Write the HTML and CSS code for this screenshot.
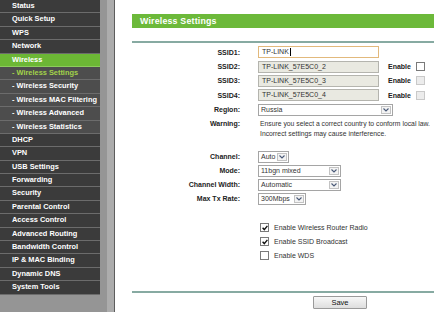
FILE: index.html
```html
<!DOCTYPE html>
<html>
<head>
<meta charset="utf-8">
<link rel="stylesheet" href="styles.css">
</head>
<body>
<div class="page">
  <nav class="sidebar">
    <ul class="menu">
      <li class="item">Status</li>
      <li class="item">Quick Setup</li>
      <li class="item">WPS</li>
      <li class="item">Network</li>
      <li class="item active">Wireless</li>
      <li class="item sub current">- Wireless Settings</li>
      <li class="item sub">- Wireless Security</li>
      <li class="item sub">- Wireless MAC Filtering</li>
      <li class="item sub">- Wireless Advanced</li>
      <li class="item sub">- Wireless Statistics</li>
      <li class="item">DHCP</li>
      <li class="item">VPN</li>
      <li class="item">USB Settings</li>
      <li class="item">Forwarding</li>
      <li class="item">Security</li>
      <li class="item">Parental Control</li>
      <li class="item">Access Control</li>
      <li class="item">Advanced Routing</li>
      <li class="item">Bandwidth Control</li>
      <li class="item">IP &amp; MAC Binding</li>
      <li class="item">Dynamic DNS</li>
      <li class="item">System Tools</li>
    </ul>
  </nav>
  <main class="main">
    <div class="content">
      <div class="title">Wireless Settings</div>
      <div class="rule rule-top"></div>
      <div class="form">
        <div class="row tall">
          <span class="label">SSID1:</span>
          <div class="field"><span class="input focus">TP-LINK<span class="caret"></span></span></div>
        </div>
        <div class="row tall">
          <span class="label">SSID2:</span>
          <div class="field"><span class="input gray">TP-LINK_57E5C0_2</span><span class="enable">Enable</span><span class="check"></span></div>
        </div>
        <div class="row tall">
          <span class="label">SSID3:</span>
          <div class="field"><span class="input gray">TP-LINK_57E5C0_3</span><span class="enable">Enable</span><span class="check disabled"></span></div>
        </div>
        <div class="row tall">
          <span class="label">SSID4:</span>
          <div class="field"><span class="input gray">TP-LINK_57E5C0_4</span><span class="enable">Enable</span><span class="check disabled"></span></div>
        </div>
        <div class="row tall">
          <span class="label">Region:</span>
          <div class="field"><span class="select w-region"><span class="val">Russia</span><span class="arrow"><svg width="6" height="4" viewBox="0 0 6 4"><path d="M0.5 0.5 L3 3 L5.5 0.5" fill="none" stroke="#4a5a78" stroke-width="1.1"/></svg></span></span></div>
        </div>
        <div class="row warn">
          <span class="label">Warning:</span>
          <div class="note">Ensure you select a correct country to conform local law.<br>Incorrect settings may cause interference.</div>
        </div>
        <div class="row first-sel">
          <span class="label">Channel:</span>
          <div class="field"><span class="select w-channel"><span class="val">Auto</span><span class="arrow"><svg width="6" height="4" viewBox="0 0 6 4"><path d="M0.5 0.5 L3 3 L5.5 0.5" fill="none" stroke="#4a5a78" stroke-width="1.1"/></svg></span></span></div>
        </div>
        <div class="row">
          <span class="label">Mode:</span>
          <div class="field"><span class="select w-mode"><span class="val">11bgn mixed</span><span class="arrow"><svg width="6" height="4" viewBox="0 0 6 4"><path d="M0.5 0.5 L3 3 L5.5 0.5" fill="none" stroke="#4a5a78" stroke-width="1.1"/></svg></span></span></div>
        </div>
        <div class="row">
          <span class="label">Channel Width:</span>
          <div class="field"><span class="select w-mode"><span class="val">Automatic</span><span class="arrow"><svg width="6" height="4" viewBox="0 0 6 4"><path d="M0.5 0.5 L3 3 L5.5 0.5" fill="none" stroke="#4a5a78" stroke-width="1.1"/></svg></span></span></div>
        </div>
        <div class="row">
          <span class="label">Max Tx Rate:</span>
          <div class="field"><span class="select w-rate"><span class="val">300Mbps</span><span class="arrow"><svg width="6" height="4" viewBox="0 0 6 4"><path d="M0.5 0.5 L3 3 L5.5 0.5" fill="none" stroke="#4a5a78" stroke-width="1.1"/></svg></span></span></div>
        </div>
        <div class="row first-opt">
          <span class="label"></span>
          <div class="field opt"><span class="check on"><svg width="6" height="6" viewBox="0 0 6 6"><path d="M0.6 2.8 L2.3 4.6 L5.4 0.9" fill="none" stroke="#111" stroke-width="1.4"/></svg></span><span class="opt-text">Enable Wireless Router Radio</span></div>
        </div>
        <div class="row">
          <span class="label"></span>
          <div class="field opt"><span class="check on"><svg width="6" height="6" viewBox="0 0 6 6"><path d="M0.6 2.8 L2.3 4.6 L5.4 0.9" fill="none" stroke="#111" stroke-width="1.4"/></svg></span><span class="opt-text">Enable SSID Broadcast</span></div>
        </div>
        <div class="row">
          <span class="label"></span>
          <div class="field opt"><span class="check"></span><span class="opt-text">Enable WDS</span></div>
        </div>
      </div>
      <div class="rule rule-bottom"></div>
      <div class="actions"><span class="button">Save</span></div>
    </div>
  </main>
</div>
</body>
</html>
```
FILE: styles.css
```css
* { box-sizing: border-box; }
html, body { margin: 0; padding: 0; }
body {
  width: 434px;
  height: 312px;
  overflow: hidden;
  font-family: "Liberation Sans", Arial, sans-serif;
  background: #fff;
}
.page {
  display: flex;
  height: 312px;
  overflow: hidden;
}
.sidebar {
  flex: 0 0 115px;
  background: #959595;
  box-shadow: inset -7px 0 0 #acacac;
  border-right: 1px solid #5d5d5d;
}
.menu {
  list-style: none;
  margin: 0;
  padding: 0;
  width: 100px;
}
.item {
  height: 13.4px;
  line-height: 12.4px;
  border-bottom: 1px solid #6c6c6c;
  background: #3b3b3b;
  color: #fff;
  font-size: 7.4px;
  font-weight: bold;
  padding-left: 12px;
  white-space: nowrap;
}
.item.active {
  background: #6cb735;
  border-bottom-color: #8ccc5c;
}
.item.sub {
  background: #4d4d4d;
}
.item.current {
  color: #a3d24a;
}
.main {
  flex: 1;
  background: #fff;
  padding-left: 17px;
  overflow: hidden;
}
.content {
  width: 416px;
}
.title {
  margin-top: 14px;
  height: 14px;
  line-height: 14px;
  background: #6cb93a;
  color: #fff;
  font-weight: bold;
  font-size: 8.8px;
  padding-left: 8px;
  letter-spacing: 0.2px;
}
.rule {
  height: 2px;
  background: #87aaa2;
}
.rule-top { margin-top: 13px; }
.form { padding-top: 2px; }
.row {
  display: grid;
  grid-template-columns: 108px 1fr;
  column-gap: 18px;
  align-items: center;
  height: 14px;
}
.row.tall { height: 14.4px; }
.row.warn {
  align-items: start;
  height: 20px;
  margin-top: 2px;
  line-height: 10px;
}
.row.first-sel { margin-top: 11px; }
.row.first-opt { margin-top: 15px; }
.label {
  text-align: right;
  font-weight: bold;
  font-size: 7px;
  color: #222;
  white-space: nowrap;
}
.field {
  display: flex;
  align-items: center;
}
.input {
  width: 121px;
  height: 12px;
  line-height: 10px;
  border: 1px solid #a8a8a8;
  font-size: 7px;
  color: #333;
  padding-left: 3px;
  display: flex;
  align-items: center;
  white-space: nowrap;
}
.input.focus {
  background: #fff;
  border-color: #e2b97c;
}
.input.gray {
  background: #e9e9e1;
  border-color: #b4b4ae;
}
.caret {
  display: inline-block;
  width: 1px;
  height: 8px;
  background: #000;
  margin-left: 1px;
}
.enable {
  font-size: 7px;
  font-weight: bold;
  color: #222;
  margin-left: 9px;
  margin-right: 5px;
}
.check {
  width: 9px;
  height: 9px;
  border: 1px solid #7a7a7a;
  background: #fff;
  display: flex;
  align-items: center;
  justify-content: center;
}
.check.disabled {
  border-color: #c9c9c9;
  background: #ececec;
}
.select {
  height: 12px;
  border: 1px solid #a5a5a5;
  background: #fff;
  display: flex;
  align-items: stretch;
}
.select .val {
  flex: 1;
  font-size: 7px;
  color: #333;
  line-height: 10px;
  padding-left: 2px;
  white-space: nowrap;
}
.select .arrow {
  width: 10px;
  margin: 1px;
  border: 1px solid #c3c3c3;
  background: #f3f3f3;
  display: flex;
  align-items: center;
  justify-content: center;
}
.w-region { width: 135px; }
.w-channel { width: 31px; }
.w-mode { width: 83px; }
.w-rate { width: 48px; }
.note {
  font-size: 6.8px;
  color: #333;
  white-space: nowrap;
  padding-left: 2px;
}
.opt { padding-left: 2px; }
.opt-text {
  font-size: 7px;
  color: #333;
  margin-left: 5px;
  white-space: nowrap;
}
.rule-bottom { margin-top: 28px; }
.actions {
  display: flex;
  justify-content: center;
  margin-top: 3px;
}
.button {
  width: 54px;
  height: 13px;
  line-height: 11px;
  text-align: center;
  font-size: 7.5px;
  color: #111;
  border: 1px solid #9a9a9a;
  border-radius: 1px;
  background: linear-gradient(#f7f7f7, #dedede);
}
```
